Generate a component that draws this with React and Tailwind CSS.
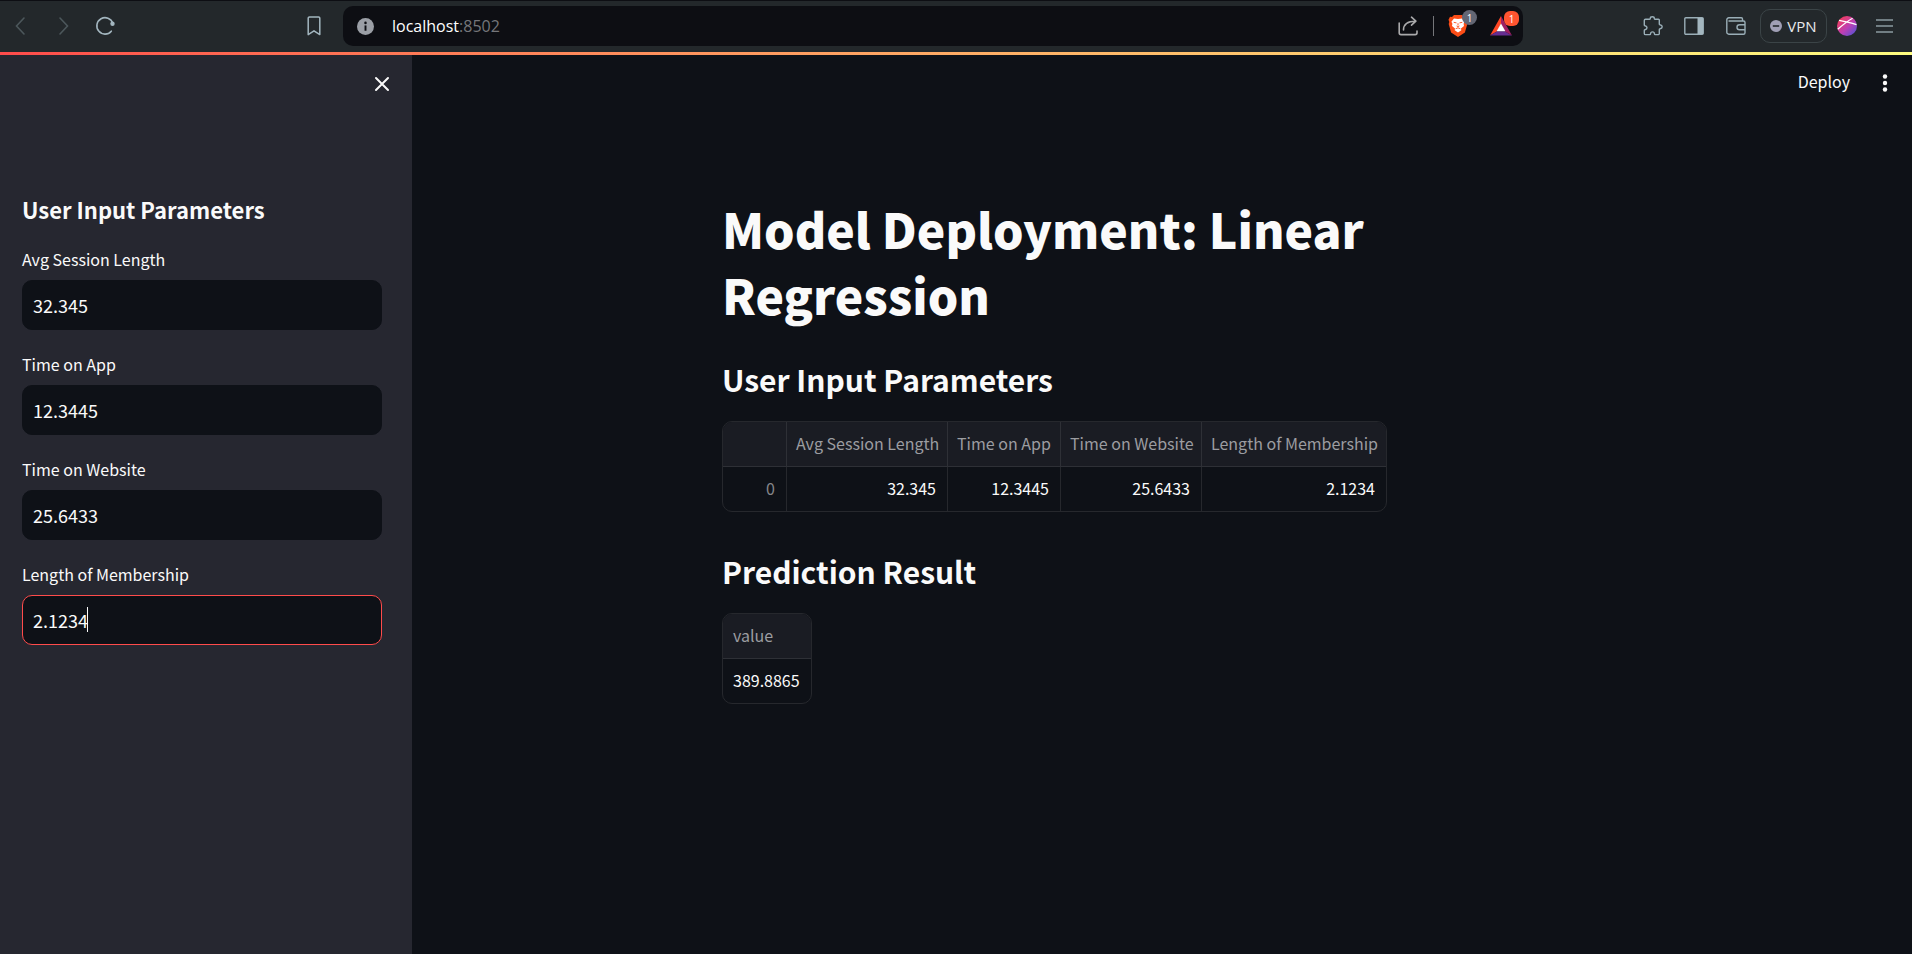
import React from "react";

const FONT = "font-['Noto_Sans_CJK_SC',sans-serif]";

const fields = [
  { id: "session", label: "Avg Session Length", value: "32.345" },
  { id: "app", label: "Time on App", value: "12.3445" },
  { id: "website", label: "Time on Website", value: "25.6433" },
  { id: "membership", label: "Length of Membership", value: "2.1234", active: true },
];

function IconButton({ label, className = "", children }) {
  return (
    <button type="button" aria-label={label} className={`flex shrink-0 items-center justify-center ${className}`}>
      {children}
    </button>
  );
}

function Chevron({ flip }) {
  return (
    <svg width="12" height="20" viewBox="0 0 12 20" fill="none" stroke="#4c575b" strokeWidth="1.6" strokeLinecap="round">
      <path d={flip ? "M2 2l7.5 8L2 18" : "M10 2L2.5 10l7.500 8"} />
    </svg>
  );
}

function ReloadIcon() {
  return (
    <svg width="22" height="22" viewBox="0 0 22 22" fill="none">
      <path d="M17.800 8.200A8.200 8.200 0 1 0 16.300 16.200" stroke="#a3b6bf" strokeWidth="1.6" strokeLinecap="round" />
      <circle cx="17.500" cy="8.800" r="2.200" fill="#a3b6bf" />
    </svg>
  );
}

function BookmarkIcon() {
  return (
    <svg width="14" height="20" viewBox="0 0 14 20" fill="none" stroke="#a3b6bf" strokeWidth="1.5" strokeLinejoin="round">
      <path d="M1.200 2.200a1.200 1.200 0 0 1 1.200-1.200h9.200a1.200 1.200 0 0 1 1.200 1.200V18.600L7 14.800l-5.800 3.800z" />
    </svg>
  );
}

function InfoIcon() {
  return (
    <svg width="17" height="17" viewBox="0 0 16 16">
      <circle cx="8" cy="8" r="8" fill="#9b9fa6" />
      <circle cx="8" cy="4.600" r="1.200" fill="#0d0e13" />
      <path d="M8 7v5" stroke="#0d0e13" strokeWidth="1.8" />
    </svg>
  );
}

function ShareIcon() {
  return (
    <svg width="20" height="20" viewBox="0 0 20 20" fill="none" stroke="#a9a9ab" strokeWidth="1.600" strokeLinecap="round" strokeLinejoin="round">
      <path d="M1.200 7v9.800a1.800 1.800 0 0 0 1.800 1.800h14.200a1.800 1.800 0 0 0 1.800-1.800V15" />
      <path d="M5.500 14c0-5.500 3-8.800 12-8.800M13.500 1.200l4.400 4-4.400 4" />
    </svg>
  );
}

function BraveIcon() {
  return (
    <svg width="20" height="24" viewBox="0 0 20 24">
      <path d="M6 1h8l2 2 2-.2 1.500 3-.8 2.200.6 2-2.400 8.500L10 23l-6.900-4.500L.7 10l.6-2L.5 5.800l1.500-3L4 3z" fill="#fb4d17" />
      <path d="M6 4.500l4 .6 4-.6 2.600 3.200-1 2 .4 2.300-3 2.500.3 1.700L10 18.500 6.700 16.200l.3-1.700L4 12l.4-2.300-1-2z" fill="#fff" />
      <path d="M5.700 8.300l2.800.6M14.300 8.300l-2.800.6M10 9.200v2.400M8.600 12L10 13l1.400-1M7.600 14.800l2.400-1 2.400 1" stroke="#fb4d17" strokeWidth="0.900" fill="none" />
    </svg>
  );
}

function RewardsIcon() {
  return (
    <svg width="22" height="20" viewBox="0 0 22 20">
      <path d="M11 0L0 19.500l7.200-4.300L11 8z" fill="#ff4724" />
      <path d="M0 19.500h22l-7.200-4.300H7.200z" fill="#662d91" />
      <path d="M22 19.500L11 0v8l3.800 7.200z" fill="#9e1f63" />
      <path d="M11 7.500L6.600 15.300h8.800z" fill="#fff" />
    </svg>
  );
}

function PuzzleIcon() {
  return (
    <svg width="20" height="20" viewBox="0 0 20 20" fill="none" stroke="#9aaeb7" strokeWidth="1.400" strokeLinejoin="round">
      <path d="M2.500 3.200h4.200c.5 0 .6-.3.600-.7C7.300 1.500 8.200.8 9.300.8s2 .7 2 1.700c0 .4.100.7.600.700h3.600a.8.800 0 0 1 .8.800v4c0 .5.300.6.700.7 1.200.2 2.200.9 2.200 2s-1 1.800-2 2c-.5.100-.9.200-.9.700v4.400a.8.800 0 0 1-.8.800h-3.400c-.5 0-.6-.3-.6-.7-.1-1.200-.9-2-2-2s-1.900.8-2 2c0 .4-.1.700-.6.700H2.500a1.200 1.200 0 0 1-1.200-1.200v-3c0-.5.300-.6.700-.7 1.200-.2 2-.8 2-1.900s-.8-1.800-2-2c-.4-.1-.7-.200-.7-.7V4.400a1.200 1.200 0 0 1 1.200-1.200z" />
    </svg>
  );
}

function PanelIcon() {
  return (
    <svg width="20" height="18" viewBox="0 0 20 18">
      <rect x=".8" y=".8" width="18.400" height="16.400" rx="1" fill="none" stroke="#9aaeb7" strokeWidth="1.400" />
      <path d="M13.500 1h5.700v16h-5.700z" fill="#a3b6bf" />
    </svg>
  );
}

function WalletIcon() {
  return (
    <svg width="20" height="18" viewBox="0 0 20 18" fill="none" stroke="#9aaeb7" strokeWidth="1.400" strokeLinejoin="round">
      <path d="M16.500 4V2A1.200 1.200 0 0 0 15.300.8H2.800a2 2 0 0 0-2 2v12.400a2 2 0 0 0 2 2h14.700a1.500 1.500 0 0 0 1.500-1.500V5.500A1.500 1.500 0 0 0 17.500 4H2.500" />
      <path d="M19 7.700h-5.500a2.500 2.500 0 0 0 0 5H19" />
    </svg>
  );
}

function AvatarIcon() {
  return (
    <svg width="20" height="20" viewBox="0 0 20 20">
      <defs>
        <linearGradient id="avatar" x1="0" y1="0" x2="1" y2="1">
          <stop offset="0.150" stopColor="#ee3d62" />
          <stop offset="0.550" stopColor="#bd3fb5" />
          <stop offset="1" stopColor="#3f56d8" />
        </linearGradient>
      </defs>
      <circle cx="10" cy="10" r="10" fill="url(#avatar)" />
      <path d="M.8 13.200C5 9.500 9.500 5.500 15.600 2.200M2 4.300c5.500 1.500 11 1.800 17.500 4.400" stroke="#fff" strokeWidth="1.300" fill="none" />
    </svg>
  );
}

function BrowserBar() {
  return (
    <header className="flex h-[52px] shrink-0 items-center border-t border-[#0d0e13] bg-[#23282b] pb-px">
      <div className="flex w-[343px] shrink-0 items-center">
        <IconButton label="Back" className="ml-[14px] w-3"><Chevron /></IconButton>
        <IconButton label="Forward" className="ml-8 w-3"><Chevron flip /></IconButton>
        <IconButton label="Reload" className="ml-[25px] w-[22px]"><ReloadIcon /></IconButton>
        <IconButton label="Bookmark" className="mr-[22px] ml-auto w-[14px]"><BookmarkIcon /></IconButton>
      </div>
      <div className="flex h-10 min-w-0 flex-1 items-center rounded-[10px] bg-[#0d0e13] pr-1 pl-[14px]">
        <InfoIcon />
        <p className="ml-[18px] flex-1 font-['Open_Sans',sans-serif] text-base leading-5 text-[#75767a]">
          <span className="text-white">localhost</span>:8502
        </p>
        <IconButton label="Share"><ShareIcon /></IconButton>
        <span className="mr-[14px] ml-[15px] h-5 w-px bg-[#75767a]" />
        <button type="button" aria-label="Brave Shields" className="relative h-6 w-5">
          <BraveIcon />
          <span className="absolute -top-1 left-[14px] flex h-[15px] w-[15px] items-center justify-center rounded-full bg-[#636674] font-['Open_Sans',sans-serif] text-[10px] leading-none text-white">1</span>
        </button>
        <button type="button" aria-label="Brave Rewards" className="relative mr-[7px] ml-[22px] h-5 w-[22px]">
          <RewardsIcon />
          <span className="absolute -top-[5px] left-[14px] flex h-[15px] w-[15px] items-center justify-center rounded-[6px] bg-[#ff5430] font-['Open_Sans',sans-serif] text-[10px] leading-none text-white">1</span>
        </button>
      </div>
      <div className="flex w-[389px] shrink-0 items-center justify-end pr-[19px]">
        <IconButton label="Extensions"><PuzzleIcon /></IconButton>
        <IconButton label="Side panel" className="ml-[21px]"><PanelIcon /></IconButton>
        <IconButton label="Wallet" className="ml-[22px]"><WalletIcon /></IconButton>
        <button type="button" className="ml-[14px] flex h-[34px] w-[67px] items-center justify-center gap-[5px] rounded-[10px] border border-[#3b4447] font-['Open_Sans',sans-serif] text-[15px] text-[#e8eaec]">
          <svg width="12" height="12" viewBox="0 0 12 12">
            <circle cx="6" cy="6" r="6" fill="#a09fb5" />
            <path d="M2.800 6h6.400" stroke="#23282b" strokeWidth="1.600" />
          </svg>
          VPN
        </button>
        <IconButton label="Profile" className="ml-[10px]"><AvatarIcon /></IconButton>
        <IconButton label="Menu" className="ml-[19px]">
          <svg width="17" height="14" viewBox="0 0 17 14" stroke="#8c9aa1" strokeWidth="1.500">
            <path d="M0 1h17M0 7h17M0 13h17" />
          </svg>
        </IconButton>
      </div>
    </header>
  );
}

function Sidebar() {
  return (
    <aside className="w-[412px] shrink-0 bg-[#262730] pr-[30px] pl-[22px]">
      <div className="flex h-[136px] items-start justify-end pt-[21px]">
        <IconButton label="Close sidebar" className="-mr-4 h-4 w-8">
          <svg width="16" height="16" viewBox="0 0 16 16" stroke="#fafafa" strokeWidth="2" strokeLinecap="round">
            <path d="M2 2l12 12M14 2L2 14" />
          </svg>
        </IconButton>
      </div>
      <h2 className="mb-[17px] text-[22px] leading-[36px] font-semibold">User Input Parameters</h2>
      <form className="flex flex-col gap-[19px]">
        {fields.map((f) => (
          <div key={f.id} className="flex flex-col gap-[6px]">
            <label htmlFor={f.id} className="text-base leading-[30px]">{f.label}</label>
            <div className="relative">
              <input
                id={f.id}
                type="text"
                defaultValue={f.value}
                className={`h-[50px] w-full rounded-[10px] border bg-[#0e1117] px-[10px] pb-px text-lg text-[#fafafa] outline-none ${f.active ? "border-[#ff4b4b]" : "border-[#0e1117]"}`}
              />
              {f.active && <span className="absolute top-3 left-[65px] h-[25px] w-px bg-[#fafafa]" />}
            </div>
          </div>
        ))}
      </form>
    </aside>
  );
}

const columns = [
  { name: "Avg Session Length", value: "32.345", width: "w-[161px]" },
  { name: "Time on App", value: "12.3445", width: "w-[113px]" },
  { name: "Time on Website", value: "25.6433", width: "w-[141px]" },
  { name: "Length of Membership", value: "2.1234", width: "w-[184px]" },
];

function DataTable() {
  return (
    <div className="w-fit overflow-hidden rounded-[10px] border border-[#26282d]">
      <table className="table-fixed border-separate border-spacing-0 text-base">
        <thead>
          <tr className="h-[45px] bg-[#1a1c23] text-[#9c9da1]">
            <td className="w-[64px] border-r border-b border-[#2e3036]" />
            {columns.map((c) => (
              <th key={c.name} scope="col" className={`${c.width} border-r border-b border-[#2e3036] p-0 pb-[2px] pl-[9px] text-left font-normal whitespace-nowrap last:border-r-0`}>{c.name}</th>
            ))}
          </tr>
        </thead>
        <tbody>
          <tr className="h-[44px] text-right text-[#fafafa]">
            <th scope="row" className="border-r border-[#26282d] p-0 pr-[11px] pb-[2px] text-right font-normal text-[#85868a]">0</th>
            {columns.map((c) => (
              <td key={c.name} className="border-r border-[#26282d] p-0 pr-[11px] pb-[2px] last:border-r-0">{c.value}</td>
            ))}
          </tr>
        </tbody>
      </table>
    </div>
  );
}

function ResultTable() {
  return (
    <div className="w-fit overflow-hidden rounded-[10px] border border-[#26282d]">
      <table className="border-separate border-spacing-0 text-base">
        <thead>
          <tr className="h-[45px] bg-[#1a1c23] text-[#9c9da1]">
            <th scope="col" className="w-[88px] border-b border-[#2e3036] p-0 pb-[2px] pl-[10px] text-left font-normal">value</th>
          </tr>
        </thead>
        <tbody>
          <tr className="h-[44px] text-[#fafafa]">
            <td className="p-0 pb-[2px] pl-[10px]">389.8865</td>
          </tr>
        </tbody>
      </table>
    </div>
  );
}

export default function App() {
  return (
    <div className={`flex min-h-screen flex-col bg-[#0e1117] text-[#fafafa] ${FONT}`}>
      <BrowserBar />
      <div className="h-[3px] shrink-0 bg-linear-to-r from-[#ff4b4b] to-[#fffd80]" />
      <div className="flex flex-1">
        <Sidebar />
        <div className="flex min-w-0 flex-1 flex-col">
          <div className="flex h-[55px] items-center justify-end gap-8 pr-[24px]">
            <button type="button" className="pb-[3px] text-base">Deploy</button>
            <IconButton label="Main menu">
              <svg width="6" height="18" viewBox="0 0 6 18" fill="#fafafa">
                <circle cx="3" cy="2.500" r="2.200" />
                <circle cx="3" cy="9" r="2.200" />
                <circle cx="3" cy="15.500" r="2.200" />
              </svg>
            </IconButton>
          </div>
          <main className="mx-auto w-full max-w-[920px] px-5 pt-[85px]">
            <h1 className="text-[48px] leading-[66px] font-black">Model Deployment: Linear Regression</h1>
            <h2 className="mt-[30px] mb-5 text-[30px] leading-[44px] font-semibold">User Input Parameters</h2>
            <DataTable />
            <h2 className="mt-[37px] mb-5 text-[30px] leading-[44px] font-semibold">Prediction Result</h2>
            <ResultTable />
          </main>
        </div>
      </div>
    </div>
  );
}
